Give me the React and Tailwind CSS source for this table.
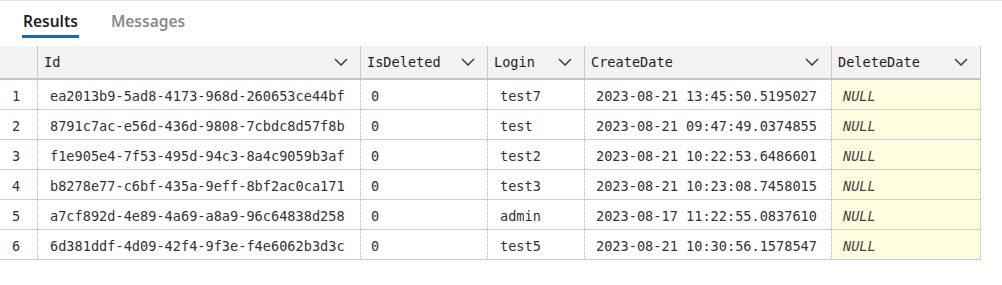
import React from "react";

const rows = [
  ["ea2013b9-5ad8-4173-968d-260653ce44bf", "0", "test7", "2023-08-21 13:45:50.5195027"],
  ["8791c7ac-e56d-436d-9808-7cbdc8d57f8b", "0", "test", "2023-08-21 09:47:49.0374855"],
  ["f1e905e4-7f53-495d-94c3-8a4c9059b3af", "0", "test2", "2023-08-21 10:22:53.6486601"],
  ["b8278e77-c6bf-435a-9eff-8bf2ac0ca171", "0", "test3", "2023-08-21 10:23:08.7458015"],
  ["a7cf892d-4e89-4a69-a8a9-96c64838d258", "0", "admin", "2023-08-17 11:22:55.0837610"],
  ["6d381ddf-4d09-42f4-9f3e-f4e6062b3d3c", "0", "test5", "2023-08-21 10:30:56.1578547"],
];

const columns = ["Id", "IsDeleted", "Login", "CreateDate", "DeleteDate"];

function Chevron() {
  return (
    <svg width="14" height="8" viewBox="0 0 14 8" className="shrink-0">
      <path d="M1 1l6 6 6-6" fill="none" stroke="#444" strokeWidth="1.6" />
    </svg>
  );
}

export default function App() {
  const mono = "font-['DejaVu_Sans_Mono','Liberation_Mono',monospace] text-[13.6px]";
  const grid = "grid grid-cols-[38px_323px_127px_97px_247px_149px] w-[981px]";

  return (
    <div className="w-[1002px] h-[285px] bg-white border-t border-[#e6e6e6] overflow-hidden">
      {/* Tabs */}
      <div className="flex items-end gap-[32px] pl-[22px] h-[37px] font-['Noto_Sans','Open_Sans',sans-serif] text-[15.5px] font-semibold">
        <div className="border-b-[3px] border-[#0f6cbd] pb-[2px] px-[1px] text-[#242424]">Results</div>
        <div className="pb-[5px] text-[#8a8a8a]">Messages</div>
      </div>

      {/* Grid */}
      <div className="mt-[8px]">
        <div className={`${grid} h-[34px] bg-[#f3f3f3] border-b-2 border-[#c4c4c4] ${mono} text-[#1e1e1e]`}>
          <div className="border-r border-[#c8c8c8]" />
          {columns.map((c) => (
            <div
              key={c}
              className="flex items-center justify-between pl-[6px] pr-[12px] border-r border-[#c8c8c8]"
            >
              <span>{c}</span>
              <Chevron />
            </div>
          ))}
        </div>

        {rows.map((r, i) => (
          <div key={i} className={`${grid} h-[30px] border-b border-[#cfcfcf] ${mono} text-[#333]`}>
            <div className="flex items-center pl-[12px] pt-[3px] border-r border-dotted border-[#b8b8b8]">
              {i + 1}
            </div>
            <div className="flex items-center pl-[12px] pt-[3px] border-r border-dotted border-[#b8b8b8]">{r[0]}</div>
            <div className="flex items-center pl-[10px] pt-[3px] border-r border-dotted border-[#b8b8b8]">{r[1]}</div>
            <div className="flex items-center pl-[12px] pt-[3px] border-r border-dotted border-[#b8b8b8]">{r[2]}</div>
            <div className="flex items-center pl-[11px] pt-[3px] border-r border-dotted border-[#b8b8b8]">{r[3]}</div>
            <div className="flex items-center pl-[11px] pt-[3px] bg-[#fffde0] italic text-[#444] border-r border-dotted border-[#b8b8b8]">
              NULL
            </div>
          </div>
        ))}
      </div>
    </div>
  );
}
